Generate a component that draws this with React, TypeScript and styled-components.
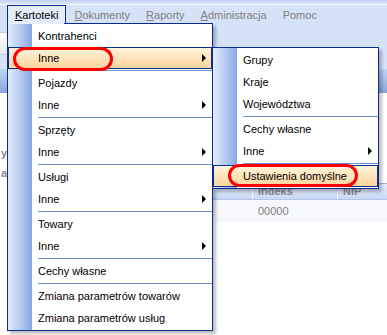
import React from "react";
import styled, { createGlobalStyle } from "styled-components";

const Global = createGlobalStyle`
  body {
    margin: 0;
    font-family: "Liberation Sans", Arial, sans-serif;
    font-size: 11px;
  }
`;

const Window = styled.div`
  position: relative;
  width: 387px;
  height: 335px;
  overflow: hidden;
  background: #fff;
`;

const TopStrip = styled.div`
  height: 4px;
  background: linear-gradient(#c2d3f1, #d9e5f9);
  border-bottom: 1px solid #f2f6fd;
`;

const MenuBar = styled.div`
  display: flex;
  height: 18px;
  padding-left: 7px;
  background: #d5e2f7;
`;

const MenuTitle = styled.div<{ $open?: boolean }>`
  display: flex;
  align-items: center;
  box-sizing: border-box;
  height: 18px;
  padding: 0 7px;
  border: 1px solid ${(p) => (p.$open ? "#0a2b8f" : "transparent")};
  border-bottom: none;
  background: ${(p) => (p.$open ? "#e5edfb" : "transparent")};
  color: ${(p) => (p.$open ? "#000" : "#808080")};
`;

const Key = styled.span`
  text-decoration: underline;
`;

const ToolArea = styled.div`
  height: 37px;
  padding-top: 9px;
  background: #d5e2f7;
`;

const ToolButton = styled.div`
  width: 26px;
  height: 21px;
  margin-left: -20px;
  border: 1px solid #c4c9d4;
  border-radius: 3px;
  background: linear-gradient(#ffffff, #e4e6ea);
`;

const CaptionBand = styled.div`
  height: 24px;
  background: linear-gradient(#c2d4f2, #86a4dc);
`;

const Body = styled.div`
  display: flex;
  height: 242px;
`;

const LeftPane = styled.div`
  width: 7px;
  padding-top: 50px;
  display: flex;
  flex-direction: column;
  align-items: flex-end;
`;

const PaneLabel = styled.div`
  height: 20px;
  line-height: 20px;
  color: #8a8a8a;
  font-weight: bold;
`;

const Content = styled.div`
  flex: 1;
  padding-top: 90px;
`;

const GridHeader = styled.div`
  display: flex;
  height: 15px;
  border-top: 1px solid #a9b4c6;
  border-bottom: 1px solid #b3c6e8;
  background: linear-gradient(#e7eefb, #c9d9f3);
`;

const HeaderCell = styled.div<{ $width?: number }>`
  ${(p) => (p.$width ? `width: ${p.$width}px;` : "flex: 1;")}
  box-sizing: border-box;
  padding-left: 5px;
  line-height: 15px;
  border-left: 1px solid #f4f7fd;
  color: #8a8a8a;
  font-weight: bold;
`;

const GridRow = styled.div`
  display: flex;
  height: 22px;
  background: #f7f8fc;
`;

const Cell = styled.div<{ $width?: number }>`
  ${(p) => (p.$width ? `width: ${p.$width}px;` : "flex: 1;")}
  box-sizing: border-box;
  padding-left: 6px;
  line-height: 22px;
  color: #808080;
`;

const Menu = styled.div<{ $left: number; $top: number; $width: number }>`
  position: absolute;
  left: ${(p) => p.$left}px;
  top: ${(p) => p.$top}px;
  width: ${(p) => p.$width}px;
  box-sizing: border-box;
  padding: 1px 0;
  border: 1px solid #0a2b8f;
  background: linear-gradient(to right, #e3edfd, #87a8e2) left / 24px 100% no-repeat, #fff;
  box-shadow: 3px 3px 3px rgba(0, 0, 0, 0.25);
  color: #000;
`;

const TitleJoin = styled.div`
  position: absolute;
  left: 0;
  top: -1px;
  width: 56px;
  height: 1px;
  background: #e5edfb;
`;

const Item = styled.div<{ $active?: boolean }>`
  position: relative;
  display: flex;
  align-items: center;
  box-sizing: border-box;
  height: 22px;
  padding: 0 5px 0 29px;
  border: 1px solid ${(p) => (p.$active ? "#0a2b8f" : "transparent")};
  background: ${(p) => (p.$active ? "linear-gradient(#fff4dc, #fcd59c)" : "transparent")};
  white-space: nowrap;
`;

const Arrow = styled.span`
  margin-left: auto;
  width: 0;
  height: 0;
  border-top: 4px solid transparent;
  border-bottom: 4px solid transparent;
  border-left: 4px solid #000;
`;

const Separator = styled.div`
  height: 1px;
  margin: 1px 0 1px 30px;
  background: #6e8fd1;
`;

const Mark = styled.div<{ $left: number; $top: number; $width: number; $height: number }>`
  position: absolute;
  left: ${(p) => p.$left}px;
  top: ${(p) => p.$top}px;
  width: ${(p) => p.$width}px;
  height: ${(p) => p.$height}px;
  box-sizing: border-box;
  border: 3px solid #ff0000;
  border-radius: 12px;
  pointer-events: none;
`;

const App = () => {
  return (
    <Window>
      <Global />
      <TopStrip />
      <MenuBar>
        <MenuTitle $open>
          <Key>K</Key>artoteki
        </MenuTitle>
        <MenuTitle>
          <Key>D</Key>okumenty
        </MenuTitle>
        <MenuTitle>
          <Key>R</Key>aporty
        </MenuTitle>
        <MenuTitle>
          <Key>A</Key>dministracja
        </MenuTitle>
        <MenuTitle>Pomoc</MenuTitle>
      </MenuBar>
      <ToolArea>
        <ToolButton />
      </ToolArea>
      <CaptionBand />
      <Body>
        <LeftPane>
          <PaneLabel>y</PaneLabel>
          <PaneLabel>a</PaneLabel>
        </LeftPane>
        <Content>
          <GridHeader>
            <HeaderCell $width={245} />
            <HeaderCell $width={85}>Indeks</HeaderCell>
            <HeaderCell>NIP</HeaderCell>
          </GridHeader>
          <GridRow>
            <Cell $width={245} />
            <Cell $width={85}>00000</Cell>
            <Cell />
          </GridRow>
        </Content>
      </Body>

      <Menu $left={7} $top={23} $width={206}>
        <TitleJoin />
        <Item>Kontrahenci</Item>
        <Item $active>
          Inne
          <Arrow />
          <Mark $left={4} $top={-1} $width={100} $height={24} />
        </Item>
        <Separator />
        <Item>Pojazdy</Item>
        <Item>
          Inne
          <Arrow />
        </Item>
        <Separator />
        <Item>Sprzęty</Item>
        <Item>
          Inne
          <Arrow />
        </Item>
        <Separator />
        <Item>Usługi</Item>
        <Item>
          Inne
          <Arrow />
        </Item>
        <Separator />
        <Item>Towary</Item>
        <Item>
          Inne
          <Arrow />
        </Item>
        <Separator />
        <Item>Cechy własne</Item>
        <Separator />
        <Item>Zmiana parametrów towarów</Item>
        <Item>Zmiana parametrów usług</Item>
      </Menu>

      <Menu $left={212} $top={47} $width={167}>
        <Item>Grupy</Item>
        <Item>Kraje</Item>
        <Item>Województwa</Item>
        <Separator />
        <Item>Cechy własne</Item>
        <Item>
          Inne
          <Arrow />
        </Item>
        <Separator />
        <Item $active>
          Ustawienia domyślne
          <Mark $left={14} $top={-2} $width={130} $height={23} />
        </Item>
      </Menu>
    </Window>
  );
};

export default App;
